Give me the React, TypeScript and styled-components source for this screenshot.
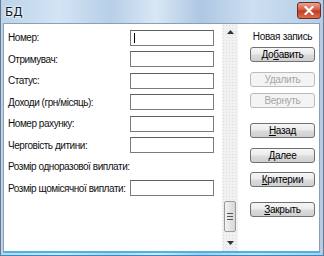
import React from 'react';
import styled, { createGlobalStyle } from 'styled-components';

const Global = createGlobalStyle`
  html, body { margin: 0; padding: 0; background: #ffffff; }
  body { font-family: "Liberation Sans", Arial, sans-serif; font-size: 11px; color: #000; }
  #root { width: 324px; height: 256px; }
`;

const Window = styled.div`
  width: 324px;
  height: 256px;
  box-sizing: border-box;
  display: flex;
  flex-direction: column;
  background: linear-gradient(90deg, #bcd3ea 0%, #d3e4f4 18%, #b8cfe8 34%, #d8e7f5 48%, #aec7e2 62%, #cddff1 78%, #b4cce7 100%);
  border-left: 1px solid #6a7a8c;
  border-right: 1px solid #6a7a8c;
  border-bottom: 1px solid #2c8fc9;
  padding: 0 3px 2px 2px;
`;

const TitleBar = styled.div`
  height: 23px;
  display: flex;
  align-items: center;
  justify-content: space-between;
  flex-shrink: 0;
`;

const Title = styled.span`
  padding-left: 2px;
  font-family: "DejaVu Sans", sans-serif;
  font-size: 12px;
  color: #0d1a28;
  text-shadow: 0 0 2px #fff, 0 0 2px #fff, 0 0 3px #fff;
`;

const CloseButton = styled.div`
  width: 22px;
  height: 15px;
  margin-top: -3px;
  margin-right: -1px;
  border: 1px solid #6b2a22;
  border-radius: 3px;
  background: linear-gradient(180deg, #e9a393 0%, #d4563f 48%, #c23a20 52%, #d9704f 100%);
  display: flex;
  align-items: center;
  justify-content: center;
`;

const Client = styled.div`
  flex: 1;
  display: flex;
  background: #ffffff;
  border: 1px solid #8aa0b8;
  border-bottom: 2px solid #48b4e4;
  min-height: 0;
`;

const Form = styled.div`
  width: 218px;
  box-sizing: border-box;
  padding: 3px 8px 0 4px;
  display: grid;
  grid-auto-rows: 21.5px;
  align-content: start;
`;

const Row = styled.div`
  display: flex;
  align-items: center;
  justify-content: space-between;
  white-space: nowrap;
`;

const Label = styled.span`
  font-size: 10px;
  letter-spacing: -0.45px;
  color: #111;
`;

const Input = styled.div<{ $caret?: boolean }>`
  width: 84px;
  height: 16px;
  flex-shrink: 0;
  box-sizing: border-box;
  border: 1px solid #7b7b7b;
  border-top-color: #5f5f5f;
  background: #fff;
  position: relative;
  &::after {
    content: '';
    display: ${p => (p.$caret ? 'block' : 'none')};
    position: absolute;
    left: 3px;
    top: 2px;
    width: 1px;
    height: 10px;
    background: #000;
  }
`;

const Scrollbar = styled.div`
  width: 16px;
  display: flex;
  flex-direction: column;
  background-color: #f1f1f1;
  background-image: radial-gradient(#dcdcdc 0.5px, transparent 0.6px);
  background-size: 3px 3px;
`;

const Arrow = styled.div`
  height: 16px;
  display: flex;
  align-items: center;
  justify-content: center;
`;

const Track = styled.div`
  flex: 1;
  display: flex;
  flex-direction: column;
  justify-content: flex-end;
  padding-bottom: 3px;
`;

const Thumb = styled.div`
  height: 31px;
  margin: 0 2px;
  box-sizing: border-box;
  border: 1px solid #9b9b9b;
  border-radius: 2px;
  background: linear-gradient(90deg, #f3f3f3, #e4e4e4 50%, #d6d6d6);
  display: flex;
  flex-direction: column;
  align-items: center;
  justify-content: center;
  gap: 2px;
`;

const Grip = styled.div`
  width: 6px;
  height: 1px;
  background: #555;
`;

const Side = styled.div`
  flex: 1;
  display: flex;
  flex-direction: column;
  align-items: center;
  padding: 5px 4px 0 12px;
`;

const Heading = styled.div`
  font-size: 10px;
  letter-spacing: -0.3px;
  color: #111;
  height: 16px;
  line-height: 16px;
  margin-bottom: 2px;
`;

const Button = styled.div<{ $disabled?: boolean; $gap?: number }>`
  width: 65px;
  height: 15px;
  box-sizing: border-box;
  margin-top: ${p => p.$gap ?? 0}px;
  border: 1px solid ${p => (p.$disabled ? '#b8bcbf' : '#707070')};
  border-radius: 3px;
  background: ${p =>
    p.$disabled
      ? '#f4f4f4'
      : 'linear-gradient(180deg, #f6f6f6 0%, #ebebeb 48%, #dcdcdc 52%, #cfcfcf 100%)'};
  color: ${p => (p.$disabled ? '#a6a6a6' : '#000')};
  font-size: 10px;
  letter-spacing: -0.3px;
  display: flex;
  align-items: center;
  justify-content: center;
  u { text-decoration: underline; }
`;

const fields: { label: string; input: boolean }[] = [
  { label: 'Номер:', input: true },
  { label: 'Отримувач:', input: true },
  { label: 'Статус:', input: true },
  { label: 'Доходи (грн/місяць):', input: true },
  { label: 'Номер рахунку:', input: true },
  { label: 'Черговість дитини:', input: true },
  { label: 'Розмір одноразової виплати:', input: false },
  { label: 'Розмір щомісячної виплати:', input: true },
];

export default function App() {
  return (
    <>
      <Global />
      <Window>
        <TitleBar>
          <Title>БД</Title>
          <CloseButton>
            <svg width="10" height="9" viewBox="0 0 10 9">
              <path d="M1.5 1 L8.5 8 M8.5 1 L1.5 8" stroke="#fff" strokeWidth="2.2" strokeLinecap="square" />
            </svg>
          </CloseButton>
        </TitleBar>
        <Client>
          <Form>
            {fields.map((f, i) => (
              <Row key={f.label}>
                <Label>{f.label}</Label>
                {f.input && <Input $caret={i === 0} />}
              </Row>
            ))}
          </Form>
          <Scrollbar>
            <Arrow>
              <svg width="7" height="4" viewBox="0 0 7 4"><path d="M0 4 L3.5 0 L7 4 Z" fill="#333" /></svg>
            </Arrow>
            <Track>
              <Thumb>
                <Grip />
                <Grip />
                <Grip />
              </Thumb>
            </Track>
            <Arrow>
              <svg width="7" height="4" viewBox="0 0 7 4"><path d="M0 0 L7 0 L3.5 4 Z" fill="#333" /></svg>
            </Arrow>
          </Scrollbar>
          <Side>
            <Heading>Новая запись</Heading>
            <Button>До<u>б</u>авить</Button>
            <Button $disabled $gap={10}>Удалить</Button>
            <Button $disabled $gap={6}>Вернуть</Button>
            <Button $gap={15}><u>Н</u>азад</Button>
            <Button $gap={10}><u>Д</u>алее</Button>
            <Button $gap={9}><u>К</u>ритерии</Button>
            <Button $gap={15}><u>З</u>акрыть</Button>
          </Side>
        </Client>
      </Window>
    </>
  );
}
